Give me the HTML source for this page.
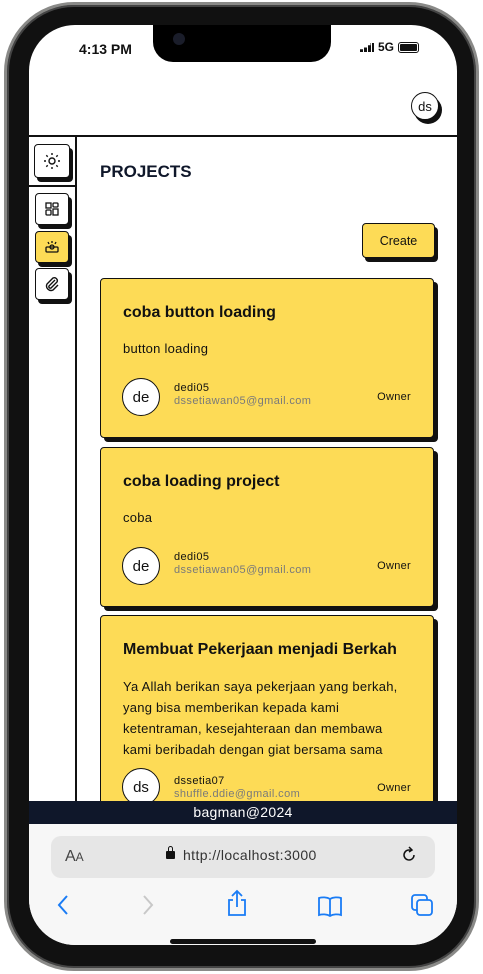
<!DOCTYPE html>
<html><head><meta charset="utf-8"><style>
*{margin:0;padding:0;box-sizing:border-box}
body{width:483px;height:974px;background:#fff;position:relative;overflow:hidden;font-family:"Liberation Sans",sans-serif;color:#111}
.a{position:absolute}
.phone{left:4px;top:2px;width:475px;height:969px;border-radius:70px;background:#111;border:3px solid #8a8a88;box-shadow:inset 0 0 0 2px #444}
.screen{left:29px;top:25px;width:428px;height:920px;border-radius:46px;background:#fff;overflow:hidden}
.btn{position:absolute;border:1.5px solid #111;border-radius:4px;background:#fff;box-shadow:3px 4px 0 #111;display:flex;align-items:center;justify-content:center}
.card{position:absolute;left:71px;width:334px;background:#fddb56;border:1.5px solid #111;border-radius:4px;box-shadow:4px 4px 0 #111}
.card h2{position:absolute;left:22px;font-size:16px;font-weight:bold}
.card p{position:absolute;left:22px;font-size:13px;line-height:21px;letter-spacing:0.25px}
.av{position:absolute;left:21px;width:38px;height:38px;border-radius:50%;background:#fff;border:1.5px solid #111;font-size:15px;display:flex;align-items:center;justify-content:center}
.nm{position:absolute;left:73px;font-size:11px;line-height:13px;letter-spacing:0.4px}
.nm span{color:#7a7a7a}
.ow{position:absolute;right:22px;font-size:11px;letter-spacing:0.3px}
</style></head><body>
<div class="a phone"></div>
<div class="a screen">
  <div class="a" style="left:124px;top:-2px;width:178px;height:39px;background:#000;border-radius:0 0 20px 20px"></div>
  <div class="a" style="left:144px;top:8px;width:12px;height:12px;border-radius:50%;background:#1a1d2a"></div>
  <div class="a" style="left:50px;top:16px;font-size:14px;font-weight:bold">4:13 PM</div>
  <div class="a" style="left:331px;top:18px;width:14px;height:9px;background:linear-gradient(90deg,#111 3px,transparent 3px,transparent 4px,#111 4px,#111 7px,transparent 7px,transparent 8px,#111 8px,#111 11px,transparent 11px,transparent 12px,#111 12px);clip-path:polygon(0 70%,25% 70%,25% 50%,50% 50%,50% 25%,75% 25%,75% 0,100% 0,100% 100%,0 100%)"></div>
  <div class="a" style="left:349px;top:15px;font-size:12px;font-weight:bold">5G</div>
  <div class="a" style="left:369px;top:17px;width:21px;height:11px;border:1.5px solid #111;border-radius:3px;padding:1px"><div style="width:100%;height:100%;background:#111;border-radius:1px"></div></div>
  <div class="btn" style="left:382px;top:67px;width:28px;height:28px;border-radius:50%;font-size:13px">ds</div>
  <div class="a" style="left:0;top:110px;width:428px;height:1.5px;background:#111"></div>
  <div class="a" style="left:46px;top:110px;width:2px;height:670px;background:#111"></div>
  <div class="a" style="left:0;top:160px;width:47px;height:1.5px;background:#111"></div>
  <div class="btn" style="left:5px;top:119px;width:36px;height:34px"><svg width="18" height="18" viewBox="0 0 18 18" fill="none" stroke="#111" stroke-width="1.4"><circle cx="9" cy="9" r="3"/><path d="M9 1v2M9 15v2M1 9h2M15 9h2M3.3 3.3l1.4 1.4M13.3 13.3l1.4 1.4M3.3 14.7l1.4-1.4M13.3 4.7l1.4-1.4"/></svg></div>
  <div class="btn" style="left:6px;top:168px;width:34px;height:32px"><svg width="14" height="14" viewBox="0 0 14 14" fill="none" stroke="#111" stroke-width="1.3"><rect x="1" y="1" width="5" height="5"/><rect x="8" y="1" width="5" height="4" rx="1"/><rect x="1" y="8" width="5" height="5" rx="1"/><rect x="8" y="7" width="5" height="6"/></svg></div>
  <div class="btn" style="left:6px;top:206px;width:34px;height:32px;background:#fddb56"><svg width="16" height="14" viewBox="0 0 16 14" fill="none" stroke="#111" stroke-width="1.3"><rect x="2" y="7" width="12" height="5" rx="1"/><circle cx="8" cy="7" r="2"/><path d="M8 1v2M4 2l1 2M12 2l-1 2"/></svg></div>
  <div class="btn" style="left:6px;top:243px;width:34px;height:32px"><svg width="16" height="16" viewBox="0 0 16 16" fill="none" stroke="#111" stroke-width="1.4"><path d="M11 4L5 10a1.5 1.5 0 0 0 2 2l6-6a3 3 0 0 0-4-4L3 8a4.5 4.5 0 0 0 6 6l5-5"/></svg></div>
  <div class="a" style="left:71px;top:137px;font-size:17px;font-weight:bold;color:#0f172a">PROJECTS</div>
  <div class="btn" style="left:333px;top:198px;width:73px;height:35px;background:#fddb56;font-size:12.5px">Create</div>
  <div class="card" style="top:253px;height:160px">
    <h2 style="top:25px">coba button loading</h2>
    <p style="top:59px">button loading</p>
    <div class="av" style="top:99px">de</div>
    <div class="nm" style="top:103px">dedi05<br><span>dssetiawan05@gmail.com</span></div>
    <div class="ow" style="top:112px">Owner</div>
  </div>
  <div class="card" style="top:422px;height:160px">
    <h2 style="top:25px">coba loading project</h2>
    <p style="top:59px">coba</p>
    <div class="av" style="top:99px">de</div>
    <div class="nm" style="top:103px">dedi05<br><span>dssetiawan05@gmail.com</span></div>
    <div class="ow" style="top:112px">Owner</div>
  </div>
  <div class="card" style="top:590px;height:200px">
    <h2 style="top:25px">Membuat Pekerjaan menjadi Berkah</h2>
    <p style="top:60px;width:288px">Ya Allah berikan saya pekerjaan yang berkah, yang bisa memberikan kepada kami ketentraman, kesejahteraan dan membawa kami beribadah dengan giat bersama sama</p>
    <div class="av" style="top:152px">ds</div>
    <div class="nm" style="top:159px">dssetia07<br><span>shuffle.ddie@gmail.com</span></div>
    <div class="ow" style="top:166px">Owner</div>
  </div>
  <div class="a" style="left:0;top:776px;width:428px;height:23px;background:#0f172a;color:#fff;font-size:14px;text-align:center;line-height:23px;letter-spacing:0.3px">bagman@2024</div>
  <div class="a" style="left:0;top:799px;width:428px;height:130px;background:#f7f7f7"></div>
  <div class="a" style="left:22px;top:811px;width:384px;height:42px;background:#e6e6e6;border-radius:10px"></div>
  <div class="a" style="left:36px;top:823px;font-size:16px;color:#444">A<span style="font-size:12px">A</span></div>
  <div class="a" style="left:137px;top:826px;width:9px;height:8px;background:#111;border-radius:1px"></div>
  <div class="a" style="left:139px;top:821px;width:5px;height:7px;border:1.5px solid #111;border-radius:3px 3px 0 0"></div>
  <div class="a" style="left:154px;top:822px;font-size:14px;color:#333;letter-spacing:0.4px">http://localhost:3000</div>
  <svg class="a" style="left:371px;top:821px" width="18" height="18" viewBox="0 0 18 18" fill="none" stroke="#111" stroke-width="1.5"><path d="M14 9a5 5 0 1 1-3-4.6"/><path d="M9 1l3 3-3 2"/></svg>
  <svg class="a" style="left:27px;top:869px" width="14" height="22" viewBox="0 0 14 22" fill="none" stroke="#1a7cf5" stroke-width="2"><path d="M11 2L3 11l8 9"/></svg>
  <svg class="a" style="left:112px;top:869px" width="14" height="22" viewBox="0 0 14 22" fill="none" stroke="#c8c8c8" stroke-width="2"><path d="M3 2l8 9-8 9"/></svg>
  <svg class="a" style="left:197px;top:864px" width="22" height="28" viewBox="0 0 22 28" fill="none" stroke="#1a7cf5" stroke-width="1.8"><path d="M11 2v16M6 7l5-5 5 5M7 11H3v15h16V11h-4"/></svg>
  <svg class="a" style="left:288px;top:870px" width="26" height="22" viewBox="0 0 26 22" fill="none" stroke="#1a7cf5" stroke-width="1.8"><path d="M13 4v17M13 4C10 2 5 2 2 3v17c3-1 8-1 11 1 3-2 8-2 11-1V3c-3-1-8-1-11 1"/></svg>
  <svg class="a" style="left:381px;top:868px" width="24" height="24" viewBox="0 0 24 24" fill="none" stroke="#1a7cf5" stroke-width="1.8"><rect x="2" y="2" width="15" height="15" rx="3"/><rect x="7" y="7" width="15" height="15" rx="3" fill="#f7f7f7"/></svg>
  <div class="a" style="left:141px;top:914px;width:146px;height:5px;border-radius:3px;background:#111"></div>
</div>
</body></html>
